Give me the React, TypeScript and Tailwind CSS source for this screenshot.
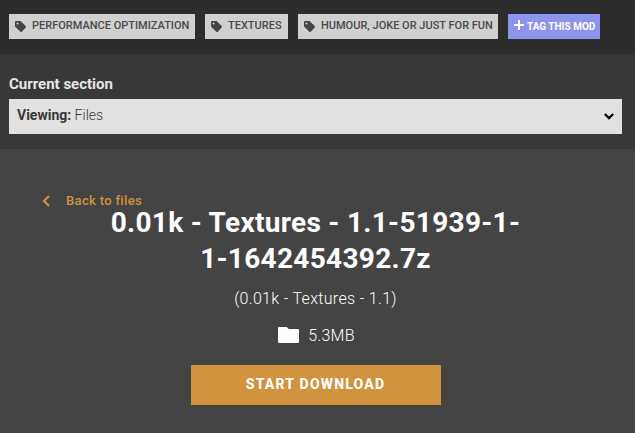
import React from "react";

function TagIcon() {
  return (
    <svg className="ml-[6px] h-[11px] w-[11px] shrink-0" viewBox="0 0 11 11" fill="#444444">
      <path
        fillRule="evenodd"
        d="M0 1.1C0 .5.5 0 1.1 0H5c.4 0 .7.1 1 .4l4.7 4.7c.4.4.4 1 0 1.4L6.8 10.7c-.4.4-1 .4-1.4 0L.4 5.9C.1 5.6 0 5.3 0 5zM2.5 1.4a1 1 0 1 0 0 2.1 1 1 0 0 0 0-2.1z"
      />
    </svg>
  );
}

function Tag({ label, width }: { label: string; width: string }) {
  return (
    <li className={`flex h-[25px] items-center bg-[#d0d0d0] ${width}`}>
      <TagIcon />
      <span className="-mt-[2px] ml-[6px] text-[11px] leading-[23px] font-medium whitespace-nowrap text-[#4a4a4a]">{label}</span>
    </li>
  );
}

export default function App() {
  return (
    <div className="h-[433px] w-[635px] overflow-hidden bg-[#444444] font-['Roboto',sans-serif]">
      <ul className="flex h-[54px] gap-[10px] bg-[#2d2d2d] pt-[14px] pl-[9px]">
        <Tag label="PERFORMANCE OPTIMIZATION" width="w-[186px]" />
        <Tag label="TEXTURES" width="w-[83px]" />
        <Tag label="HUMOUR, JOKE OR JUST FOR FUN" width="w-[200px]" />
        <li className="flex h-[25px] w-[92px] items-center bg-[#8d94ed] text-white">
          <svg className="-mt-[3px] ml-[6px] h-[10px] w-[10px] shrink-0" viewBox="0 0 10 10" fill="currentColor">
            <path d="M4 0h2v4h4v2H6v4H4V6H0V4h4z" />
          </svg>
          <span className="ml-[3px] text-[10px] font-bold whitespace-nowrap">TAG THIS MOD</span>
        </li>
      </ul>

      <section className="h-[95px] bg-[#383838] pt-[20px] pr-[13px] pl-[9px]">
        <h2 className="h-[25px] text-[15px] leading-[20px] font-bold text-[#e6e6e6]">Current section</h2>
        <div className="flex h-[35px] items-center justify-between bg-[#e1e1e1] pr-[8px] pl-[8px] text-[14px] text-[#383838]">
          <p className="-mt-[2px] font-light">
            <span className="font-bold">Viewing:</span> Files
          </p>
          <svg className="h-[7px] w-[10px]" viewBox="0 0 10 7" fill="none" stroke="#000000" strokeWidth="2.2">
            <path d="M.8 1 5 5.1 9.2 1" />
          </svg>
        </div>
      </section>

      <main className="flex flex-col items-center pt-[45px] pr-[4px]">
        <a className="flex h-[11px] w-full items-center pl-[42px] text-[13px] leading-[20px] font-medium tracking-[0.33px] text-[#d1933d]">
          <svg className="mt-[2px] h-[12px] w-[8px]" viewBox="0 0 8 12" fill="none" stroke="currentColor" strokeWidth="2.2">
            <path d="M7 1 2 6l5 5" />
          </svg>
          <span className="mt-[2px] ml-[16px]">Back to files</span>
        </a>
        <h1 className="text-center text-[28px] leading-[36px] font-bold tracking-[0.3px] whitespace-nowrap text-white">
          0.01k - Textures - 1.1-51939-1-
          <br />
          1-1642454392.7z
        </h1>
        <p className="mt-[12px] text-[16px] leading-[20px] font-light tracking-[0.32px] text-white">(0.01k - Textures - 1.1)</p>
        <div className="mt-[16px] flex h-[22px] items-center pl-[2px] text-[16px] font-light text-white">
          <svg className="-mt-[2px] h-[16px] w-[21px]" viewBox="0 0 21 16" fill="currentColor">
            <path d="M1.2 0h7.6l2 2h9a1.2 1.2 0 0 1 1.2 1.2v11.6a1.2 1.2 0 0 1-1.2 1.2H1.2A1.2 1.2 0 0 1 0 14.8V1.2A1.2 1.2 0 0 1 1.2 0z" />
          </svg>
          <span className="ml-[9px] tracking-[0.25px]">5.3MB</span>
        </div>
        <button className="mt-[18px] h-[40px] w-[250px] bg-[#d1933d] text-[14px] font-extrabold tracking-[1.2px] text-white">
          <span className="relative -top-px">START DOWNLOAD</span>
        </button>
      </main>
    </div>
  );
}
